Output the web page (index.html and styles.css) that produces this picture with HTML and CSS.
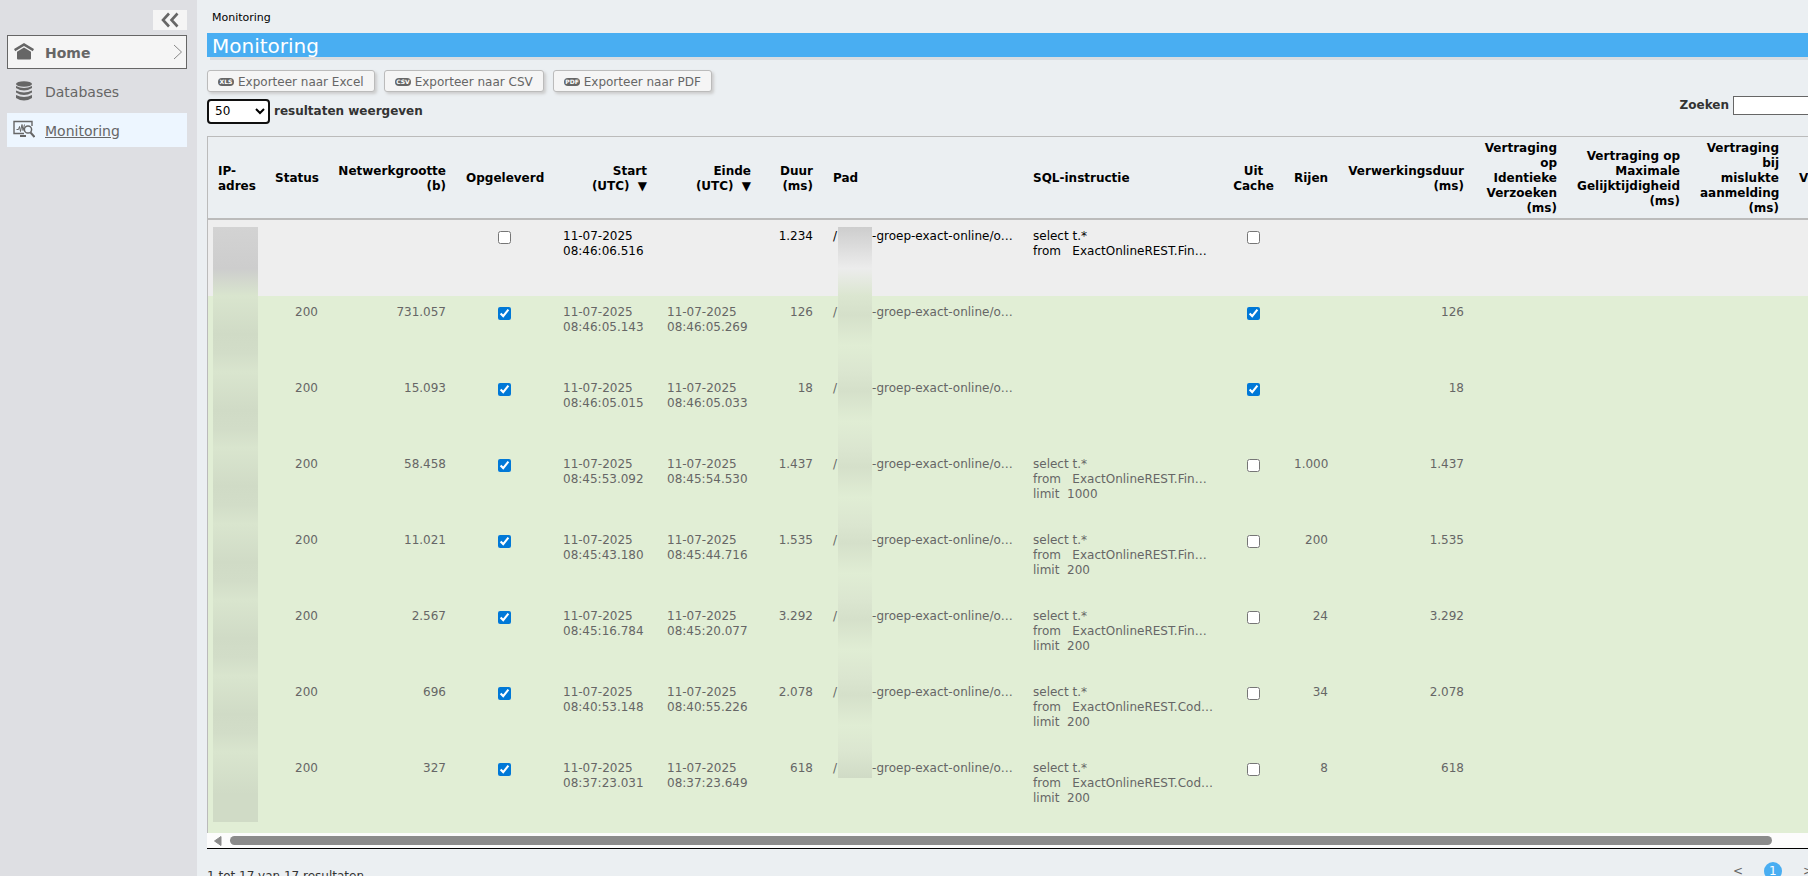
FILE: index.html
```
<!DOCTYPE html>
<html lang="nl">
<head>
  <meta charset="UTF-8">
  <meta name="viewport" content="width=device-width, initial-scale=1.0">
  <title>Monitoring</title>
  <link rel="stylesheet" href="styles.css">
</head>
<body>
  <nav class="sidebar">
    <button type="button" class="collapse" aria-label="Menu inklappen">
      <svg width="18" height="16" viewBox="0 0 18 16"><path d="M8 1.500 2 8l6 6.500M16.500 1.500l-6 6.500 6 6.500" fill="none" stroke="#666" stroke-width="2.600"/></svg>
    </button>
    <a href="#" class="nav-item current">
      <svg width="22" height="20" viewBox="0 0 22 20" fill="#666"><path d="M11 1 1 7l1.200 2.200L11 4l8.800 5.200L21 7z"/><path d="M11 5.500 4 9.800V16.500q0 1 1 1h12q1 0 1-1v-6.700z"/></svg>
      <span>Home</span>
      <svg class="arrow" width="10" height="16" viewBox="0 0 10 16"><path d="M1 1l7.500 7L1 15" fill="none" stroke="#888"/></svg>
    </a>
    <a href="#" class="nav-item">
      <svg width="22" height="20" viewBox="0 0 22 20" fill="#666"><ellipse cx="11" cy="3" rx="8" ry="2.800"/><path d="M3 5q8 4 16 0v2q-8 5-16 0zM3 9.500q8 4 16 0v2q-8 5-16 0zM3 14q8 4 16 0v3q-8 5-16 0z"/></svg>
      <span>Databases</span>
    </a>
    <a href="#" class="nav-item active">
      <svg width="22" height="20" viewBox="0 0 22 20" fill="none" stroke="#666"><path d="M11 13.500H1v-12h18V6" stroke-width="1.400"/><path d="M3.500 9.500h2l1-3 1 5 1.500-7 1 6 1.500-6"/><circle cx="15" cy="9.500" r="3.600" stroke-width="1.500"/><path d="M17.500 12.500l4 4.500" stroke-width="2"/><path d="M7 16h6" stroke-width="2"/></svg>
      <span>Monitoring</span>
    </a>
  </nav>

  <main class="content">
    <div class="breadcrumb">Monitoring</div>
    <h1>Monitoring</h1>

    <div class="exports">
      <button type="button"><svg class="badge" width="16" height="8" viewBox="0 0 16 8"><rect width="16" height="8" rx="4"/><text x="8" y="6">XLS</text></svg>Exporteer naar Excel</button>
      <button type="button"><svg class="badge" width="16" height="8" viewBox="0 0 16 8"><rect width="16" height="8" rx="4"/><text x="8" y="6">CSV</text></svg>Exporteer naar CSV</button>
      <button type="button"><svg class="badge" width="16" height="8" viewBox="0 0 16 8"><rect width="16" height="8" rx="4"/><text x="8" y="6">PDF</text></svg>Exporteer naar PDF</button>
    </div>

    <div class="toolbar">
      <label class="page-size"><select><option>50</option></select> resultaten weergeven</label>
      <label class="search">Zoeken <input type="text"></label>
    </div>

    <div class="table-wrap">
      <table>
        <colgroup>
          <col class="c-ip"><col class="c-status"><col class="c-net"><col class="c-done"><col class="c-time"><col class="c-time"><col class="c-dur"><col class="c-text"><col class="c-text"><col class="c-cache"><col class="c-rows"><col class="c-proc"><col class="c-same"><col class="c-max"><col class="c-login"><col class="c-more">
        </colgroup>
        <thead>
          <tr>
            <th class="left">IP-adres</th>
            <th>Status</th>
            <th>Netwerkgrootte (b)</th>
            <th class="center">Opgeleverd</th>
            <th>Start<br>(UTC) <span class="sort">▼</span></th>
            <th>Einde<br>(UTC) <span class="sort">▼</span></th>
            <th>Duur (ms)</th>
            <th class="left">Pad</th>
            <th class="left">SQL-instructie</th>
            <th class="center">Uit Cache</th>
            <th>Rijen</th>
            <th>Verwerkingsduur (ms)</th>
            <th>Vertraging op Identieke Verzoeken (ms)</th>
            <th>Vertraging op Maximale Gelijktijdigheid (ms)</th>
            <th>Vertraging bij mislukte aanmelding (ms)</th>
            <th class="left">Vertraging</th>
          </tr>
        </thead>
        <tbody>
          <tr class="running">
            <td class="ip"><i></i></td><td></td><td></td>
            <td class="center"><input type="checkbox" aria-label="Opgeleverd"></td>
            <td class="left">11-07-2025 08:46:06.516</td><td></td><td>1.234</td>
            <td class="path">/<i></i>-groep-exact-online/o…</td>
            <td class="sql">select t.*
from   ExactOnlineREST.Fin…</td>
            <td class="center"><input type="checkbox" aria-label="Uit cache"></td>
            <td></td><td></td><td></td><td></td><td></td><td></td>
          </tr>
          <tr>
            <td class="ip"><i></i></td><td>200</td><td>731.057</td>
            <td class="center"><input type="checkbox" aria-label="Opgeleverd" checked></td>
            <td class="left">11-07-2025 08:46:05.143</td><td class="left">11-07-2025 08:46:05.269</td><td>126</td>
            <td class="path">/<i></i>-groep-exact-online/o…</td>
            <td class="sql"></td>
            <td class="center"><input type="checkbox" aria-label="Uit cache" checked></td>
            <td></td><td>126</td><td></td><td></td><td></td><td></td>
          </tr>
          <tr>
            <td class="ip"><i></i></td><td>200</td><td>15.093</td>
            <td class="center"><input type="checkbox" aria-label="Opgeleverd" checked></td>
            <td class="left">11-07-2025 08:46:05.015</td><td class="left">11-07-2025 08:46:05.033</td><td>18</td>
            <td class="path">/<i></i>-groep-exact-online/o…</td>
            <td class="sql"></td>
            <td class="center"><input type="checkbox" aria-label="Uit cache" checked></td>
            <td></td><td>18</td><td></td><td></td><td></td><td></td>
          </tr>
          <tr>
            <td class="ip"><i></i></td><td>200</td><td>58.458</td>
            <td class="center"><input type="checkbox" aria-label="Opgeleverd" checked></td>
            <td class="left">11-07-2025 08:45:53.092</td><td class="left">11-07-2025 08:45:54.530</td><td>1.437</td>
            <td class="path">/<i></i>-groep-exact-online/o…</td>
            <td class="sql">select t.*
from   ExactOnlineREST.Fin…
limit  1000</td>
            <td class="center"><input type="checkbox" aria-label="Uit cache"></td>
            <td>1.000</td><td>1.437</td><td></td><td></td><td></td><td></td>
          </tr>
          <tr>
            <td class="ip"><i></i></td><td>200</td><td>11.021</td>
            <td class="center"><input type="checkbox" aria-label="Opgeleverd" checked></td>
            <td class="left">11-07-2025 08:45:43.180</td><td class="left">11-07-2025 08:45:44.716</td><td>1.535</td>
            <td class="path">/<i></i>-groep-exact-online/o…</td>
            <td class="sql">select t.*
from   ExactOnlineREST.Fin…
limit  200</td>
            <td class="center"><input type="checkbox" aria-label="Uit cache"></td>
            <td>200</td><td>1.535</td><td></td><td></td><td></td><td></td>
          </tr>
          <tr>
            <td class="ip"><i></i></td><td>200</td><td>2.567</td>
            <td class="center"><input type="checkbox" aria-label="Opgeleverd" checked></td>
            <td class="left">11-07-2025 08:45:16.784</td><td class="left">11-07-2025 08:45:20.077</td><td>3.292</td>
            <td class="path">/<i></i>-groep-exact-online/o…</td>
            <td class="sql">select t.*
from   ExactOnlineREST.Fin…
limit  200</td>
            <td class="center"><input type="checkbox" aria-label="Uit cache"></td>
            <td>24</td><td>3.292</td><td></td><td></td><td></td><td></td>
          </tr>
          <tr>
            <td class="ip"><i></i></td><td>200</td><td>696</td>
            <td class="center"><input type="checkbox" aria-label="Opgeleverd" checked></td>
            <td class="left">11-07-2025 08:40:53.148</td><td class="left">11-07-2025 08:40:55.226</td><td>2.078</td>
            <td class="path">/<i></i>-groep-exact-online/o…</td>
            <td class="sql">select t.*
from   ExactOnlineREST.Cod…
limit  200</td>
            <td class="center"><input type="checkbox" aria-label="Uit cache"></td>
            <td>34</td><td>2.078</td><td></td><td></td><td></td><td></td>
          </tr>
          <tr class="last">
            <td class="ip"><i></i></td><td>200</td><td>327</td>
            <td class="center"><input type="checkbox" aria-label="Opgeleverd" checked></td>
            <td class="left">11-07-2025 08:37:23.031</td><td class="left">11-07-2025 08:37:23.649</td><td>618</td>
            <td class="path">/<i></i>-groep-exact-online/o…</td>
            <td class="sql">select t.*
from   ExactOnlineREST.Cod…
limit  200</td>
            <td class="center"><input type="checkbox" aria-label="Uit cache"></td>
            <td>8</td><td>618</td><td></td><td></td><td></td><td></td>
          </tr>
          <tr><td colspan="16"></td></tr>
        </tbody>
      </table>
    </div>
    <div class="scrollbar">
      <svg width="8" height="10" viewBox="0 0 8 10"><path d="M7 .5v9L.5 5z" fill="#8b8b8b" stroke="#8b8b8b" stroke-linejoin="round"/></svg>
      <div class="thumb"></div>
    </div>

    <div class="footer">
      <span>1 tot 17 van 17 resultaten</span>
      <div class="pager">
        <a href="#">&lt;</a>
        <a href="#" class="page">1</a>
        <a href="#">&gt;</a>
      </div>
    </div>
  </main>
</body>
</html>
```
FILE: styles.css
```
* {
  box-sizing: border-box;
}

body {
  margin: 0;
  display: flex;
  height: 100vh;
  overflow: hidden;
  background-color: #ebeff2;
  color: #333;
  font-family: "DejaVu Sans", Verdana, sans-serif;
  font-size: 12px;
  line-height: 15px;
}

button, input, select {
  font-family: inherit;
}

/* sidebar */
.sidebar {
  flex: none;
  width: 197px;
  padding: 10px 10px 0 7px;
  background-color: #dedfe3;
  display: flex;
  flex-direction: column;
  gap: 5px;
}

.collapse {
  align-self: flex-end;
  width: 34px;
  height: 20px;
  padding: 0;
  border: none;
  background-color: #f5f5f5;
  display: flex;
  align-items: center;
  justify-content: center;
}

.nav-item {
  display: flex;
  align-items: center;
  gap: 10px;
  height: 34px;
  padding: 0 6px;
  color: #666;
  font-size: 14px;
  text-decoration: none;
}

.nav-item span {
  padding-top: 2px;
}

.nav-item.current {
  padding: 0 3px 0 5px;
  border: 1px solid #666;
  background-color: #f5f5f5;
  font-weight: bold;
}

.nav-item.active {
  background-color: #edf6ff;
  text-decoration: underline;
}

.arrow {
  margin-left: auto;
}

/* content runs past the right edge of the window */
.content {
  flex: 1;
  min-width: 0;
  margin-right: -80px;
  padding-left: 10px;
}

.breadcrumb {
  padding: 10px 5px 8px;
  color: #000;
  font-size: 11px;
}

h1 {
  margin: 0;
  padding-left: 5px;
  height: 24px;
  background-color: #49aef2;
  box-shadow: 3px 3px 0 #d9dde1;
  color: #fff;
  font-size: 20px;
  font-weight: normal;
  line-height: 26px;
}

.exports {
  display: flex;
  gap: 9px;
  margin-top: 13px;
}

.exports button {
  display: flex;
  align-items: center;
  gap: 4px;
  height: 22px;
  padding: 1px 10px 0;
  border: 1px solid #bbb;
  border-radius: 3px;
  background-color: #f5f5f5;
  box-shadow: 2px 2px 3px #ccc;
  color: #666;
  font-size: 12px;
}

.badge rect {
  fill: #666;
}

.badge text {
  fill: #fff;
  font-size: 6px;
  font-weight: bold;
  text-anchor: middle;
}

.toolbar {
  display: flex;
  justify-content: space-between;
  height: 44px;
  padding-top: 6px;
  font-weight: bold;
}

.page-size, .search {
  display: flex;
  align-items: center;
  gap: 4px;
}

.page-size {
  height: 26px;
}

.page-size select {
  width: 63px;
  height: 25px;
  padding: 0 2px;
  border: 2px solid #101010;
  border-radius: 4px;
  background-color: #fff;
  color: #000;
  font-size: 12px;
}

.search {
  height: 14px;
}

.search input {
  width: 155px;
  height: 19px;
  border: 1px solid #666;
  background-color: #fff;
}

/* results */
.table-wrap {
  height: calc(100vh - 179px);
  overflow: hidden;
  border: solid #bbb;
  border-width: 1px 0 0 1px;
}

table {
  width: 1720px;
  border-collapse: separate;
  border-spacing: 0;
  table-layout: fixed;
}

.c-ip { width: 57px; }
.c-status { width: 63px; }
.c-net { width: 128px; }
.c-done { width: 97px; }
.c-time { width: 104px; }
.c-dur { width: 62px; }
.c-text { width: 200px; }
.c-cache { width: 61px; }
.c-rows { width: 54px; }
.c-proc { width: 136px; }
.c-same { width: 93px; }
.c-max { width: 123px; }
.c-login { width: 99px; }

th {
  height: 83px;
  padding: 2px 10px 0;
  border-bottom: 2px solid #bbb;
  color: #000;
  text-align: right;
}

.sort {
  margin-left: 4px;
}

td {
  height: 76px;
  padding: 9px 10px 0;
  background-color: #e1eed5;
  color: #666;
  text-align: right;
  vertical-align: top;
}

.running td {
  background-color: #eee;
  color: #000;
}

.left {
  text-align: left;
}

.center {
  text-align: center;
}

td input {
  width: 13px;
  height: 13px;
  margin: 2px 0 0;
  accent-color: #0078d7;
}

.path, .sql {
  text-align: left;
  white-space: pre;
}

/* masked values */
td i {
  display: block;
  background: linear-gradient(#d9e5ce, #d0dbc6 50%, #d2ddc8 75%, #d9e5ce);
}

td.ip {
  padding: 0 7px 0 5px;
}

.ip i {
  height: 76px;
}

.running td.ip {
  padding-top: 7px;
}

.running .ip i {
  height: 69px;
  background: linear-gradient(#d3d3d3, #cdcdcd 60%, #d9e5ce);
}

.last .ip i {
  height: 70px;
  background: linear-gradient(#d9e5ce, #d0dbc6 60%);
}

td.path {
  padding-top: 0;
  line-height: 33px;
}

.path i {
  display: inline-block;
  width: 34px;
  height: 76px;
  margin-left: 1px;
  vertical-align: top;
  background: linear-gradient(#dbe6d0, #d5e0ca 25%, #e0edd4 65%, #dbe6d0);
}

.running .path i {
  height: 69px;
  margin-top: 7px;
  background: linear-gradient(#cdcdcd, #ececec 60%, #dbe6d0);
}

.last .path i {
  height: 26px;
  background: linear-gradient(#dbe6d0, #d0dbc6);
}

.scrollbar {
  display: flex;
  align-items: center;
  gap: 8px;
  height: 16px;
  padding: 0 116px 0 7px;
  border-bottom: 1px solid #000;
  background-color: #fcfcfc;
}

.thumb {
  flex: 1;
  height: 9px;
  border-radius: 5px;
  background-color: #8b8b8b;
}

.footer {
  display: flex;
  justify-content: space-between;
  padding: 13px 75px 0 0;
}

.footer > span {
  padding-top: 7px;
}

.pager {
  display: flex;
  gap: 21px;
  line-height: 18px;
}

.pager a {
  color: #666;
  text-decoration: none;
}

.pager .page {
  width: 18px;
  height: 18px;
  border-radius: 50%;
  background-color: #49aef2;
  color: #fff;
  text-align: center;
}
```
